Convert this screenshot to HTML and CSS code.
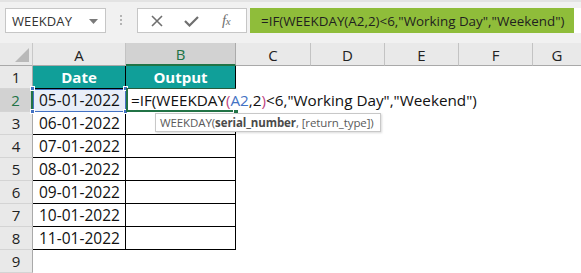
FILE: index.html
```html
<!DOCTYPE html>
<html>
<head>
<meta charset="utf-8">
<link rel="stylesheet" href="styles.css">
</head>
<body>
<div class="app">
  <div class="toolbar">
    <div class="namebox">
      <span class="name">WEEKDAY</span>
      <svg class="caret" width="9" height="5" viewBox="0 0 9 5"><path d="M0 0H9L4.5 5Z" fill="#7a7a7a"/></svg>
    </div>
    <div class="grip">
      <svg width="3" height="11" viewBox="0 0 3 11"><rect x="0" y="0" width="2" height="2" fill="#b4b4b4"/><rect x="0" y="4" width="2" height="2" fill="#b4b4b4"/><rect x="0" y="8" width="2" height="2" fill="#b4b4b4"/></svg>
    </div>
    <div class="fxbox">
      <svg class="ic" width="12" height="12" viewBox="0 0 12 12"><path d="M1 1L11 11M11 1L1 11" stroke="#6f6f6f" stroke-width="1.6"/></svg>
      <svg class="ic" width="15" height="12" viewBox="0 0 15 12"><path d="M1 6L5.5 10.5L14 2" stroke="#6f6f6f" stroke-width="2.2" fill="none"/></svg>
      <span class="fx">f<span class="x">x</span></span>
    </div>
    <div class="formula"><span class="sel">=IF(WEEKDAY(A2,2)&lt;6,"Working Day","Weekend")</span></div>
  </div>

  <div class="sheet">
    <div class="corner"><div class="tri"></div></div>
    <div class="ch">A</div>
    <div class="ch ch-on">B</div>
    <div class="ch">C</div>
    <div class="ch">D</div>
    <div class="ch">E</div>
    <div class="ch">F</div>
    <div class="ch ch-last">G</div>

    <div class="rh">1</div>
    <div class="c t th">Date</div>
    <div class="c t th">Output</div>
    <div class="c"></div><div class="c"></div><div class="c"></div><div class="c"></div><div class="c"></div>

    <div class="rh rh-on">2</div>
    <div class="c t d ref">05-01-2022
      <i class="h tl"></i><i class="h tr"></i><i class="h bl"></i><i class="h br"></i>
    </div>
    <div class="c t active">
      <div class="edit">=IF(WEEKDAY<span class="p">(</span><span class="r">A2</span>,2<span class="p">)</span>&lt;6,"Working Day","Weekend")</div>
      <div class="frame"></div>
      <div class="handle"></div>
      <div class="tip">WEEKDAY(<b>serial_number</b>, [return_type])</div>
    </div>
    <div class="c"></div><div class="c"></div><div class="c"></div><div class="c"></div><div class="c"></div>

    <div class="rh">3</div>
    <div class="c t d">06-01-2022</div><div class="c t"></div>
    <div class="c"></div><div class="c"></div><div class="c"></div><div class="c"></div><div class="c"></div>

    <div class="rh">4</div>
    <div class="c t d">07-01-2022</div><div class="c t"></div>
    <div class="c"></div><div class="c"></div><div class="c"></div><div class="c"></div><div class="c"></div>

    <div class="rh">5</div>
    <div class="c t d">08-01-2022</div><div class="c t"></div>
    <div class="c"></div><div class="c"></div><div class="c"></div><div class="c"></div><div class="c"></div>

    <div class="rh">6</div>
    <div class="c t d">09-01-2022</div><div class="c t"></div>
    <div class="c"></div><div class="c"></div><div class="c"></div><div class="c"></div><div class="c"></div>

    <div class="rh">7</div>
    <div class="c t d">10-01-2022</div><div class="c t"></div>
    <div class="c"></div><div class="c"></div><div class="c"></div><div class="c"></div><div class="c"></div>

    <div class="rh">8</div>
    <div class="c t d">11-01-2022</div><div class="c t"></div>
    <div class="c"></div><div class="c"></div><div class="c"></div><div class="c"></div><div class="c"></div>

    <div class="rh">9</div>
    <div class="c"></div><div class="c"></div>
    <div class="c"></div><div class="c"></div><div class="c"></div><div class="c"></div><div class="c"></div>
  </div>
</div>
</body>
</html>
```

FILE: styles.css
```css
* { box-sizing: border-box; }
html, body { margin: 0; padding: 0; }
body {
  width: 581px;
  height: 273px;
  overflow: hidden;
  background: #ffffff;
  font-family: "Open Sans", "Noto Sans", sans-serif;
}
.app { width: 581px; height: 273px; display: flex; flex-direction: column; }

.toolbar {
  height: 43px;
  background: #f1f1f1;
  border-top: 2px solid #e3e3e3;
  display: flex;
  align-items: flex-start;
  padding: 6px 0 0 5px;
}
.namebox {
  width: 101px;
  height: 25px;
  background: #fff;
  border: 1px solid #c6c6c6;
  display: flex;
  align-items: center;
  justify-content: space-between;
  padding: 0 7px 0 6px;
}
.name { font-size: 13px; color: #333; letter-spacing: 0.1px; }
.caret { margin-top: 1px; }
.grip { width: 31px; height: 25px; display: flex; align-items: center; justify-content: center; }
.fxbox {
  width: 110px;
  height: 25px;
  background: #fff;
  border: 1px solid #c6c6c6;
  display: flex;
  align-items: center;
  padding: 0 0 0 13px;
  gap: 0;
}
.fxbox .ic:first-child { margin-right: 21px; }
.fxbox .ic:nth-child(2) { margin-right: 23px; }
.fx {
  font-family: "Liberation Serif", serif;
  font-style: italic;
  font-size: 15px;
  color: #6f6f6f;
  letter-spacing: -0.5px;
}
.fx .x { font-size: 11px; }
.formula {
  margin-left: 3px;
  flex: 1;
  height: 25px;
  background: #fff;
  display: flex;
  align-items: center;
}
.sel {
  display: flex;
  align-items: center;
  height: 25px;
  width: 324px;
  background: #8fbd3a;
  padding-left: 11px;
  font-size: 13.4px;
  color: #1f1f1f;
  white-space: nowrap;
}

.sheet {
  display: grid;
  grid-template-columns: 33px 93px 110px 75px 74px 74px 74px 48px;
  grid-template-rows: repeat(10, 23px);
  background: #fff;
}
.corner {
  background: #e9e9e9;
  border-right: 1px solid #c8c8c8;
  border-bottom: 1px solid #a9a9a9;
  position: relative;
}
.tri {
  position: absolute;
  right: 3px;
  bottom: 3px;
  width: 0;
  height: 0;
  border-left: 14px solid transparent;
  border-bottom: 14px solid #b9b9b9;
}
.ch {
  background: #e9e9e9;
  border-right: 1px solid #c3c3c3;
  border-bottom: 1px solid #a9a9a9;
  display: flex;
  align-items: center;
  justify-content: center;
  font-size: 15px;
  color: #222;
  padding-top: 1px;
}
.ch-last { border-right: none; }
.ch-on {
  background: #d2d2d2;
  color: #217346;
  border-bottom: 2px solid #217346;
  border-right-color: #ababab;
}
.rh {
  background: #e9e9e9;
  border-right: 1px solid #a9a9a9;
  border-bottom: 1px solid #d4d4d4;
  display: flex;
  align-items: center;
  justify-content: center;
  font-size: 15px;
  color: #222;
}
.rh-on {
  background: #d2d2d2;
  color: #217346;
  border-right: 2px solid #217346;
}
.c { position: relative; }
.t {
  border-right: 1px solid #000;
  border-bottom: 1px solid #000;
}
.th {
  background: #109f99;
  color: #fff;
  font-weight: 700;
  font-size: 15px;
  display: flex;
  align-items: center;
  justify-content: center;
}
.d {
  display: flex;
  align-items: center;
  padding-left: 6px;
  font-size: 15.5px;
  color: #111;
}
.ref {
  background: #e8eef8;
  outline: 1px solid #4472c4;
  outline-offset: -1px;
  border-bottom-color: #4472c4;
  border-right-color: #4472c4;
  z-index: 2;
}
.h {
  position: absolute;
  width: 5px;
  height: 5px;
  background: #4472c4;
  border: 1px solid #ffffff;
}
.tl { left: -3px; top: -3px; }
.tr { right: -3px; top: -3px; }
.bl { left: -3px; bottom: -3px; }
.br { right: -3px; bottom: -3px; }

.active { z-index: 3; border-right: none; }
.frame {
  position: absolute;
  left: 0;
  top: -1px;
  width: 110px;
  height: 24px;
  border-left: 2px solid #217346;
  border-top: 1px solid #2a5a3c;
  border-bottom: 2px solid #217346;
  pointer-events: none;
}
.edit {
  position: absolute;
  left: 2px;
  top: 0;
  height: 22px;
  padding: 0 6px 0 3px;
  background: #fff;
  display: flex;
  align-items: center;
  white-space: nowrap;
  font-size: 15.25px;
  color: #111;
}
.p { color: #c0447f; }
.r { color: #4472c4; }
.handle {
  position: absolute;
  left: 107px;
  top: 20px;
  width: 6px;
  height: 6px;
  background: #217346;
  border: 1px solid #fff;
}
.tip {
  position: absolute;
  left: 29px;
  top: 24px;
  height: 19px;
  padding: 0 6px 0 4px;
  background: #fff;
  border: 1px solid #c8c8c8;
  box-shadow: 1px 1px 2px rgba(0,0,0,0.15);
  font-size: 11.5px;
  letter-spacing: -0.1px;
  color: #5a5a5a;
  white-space: nowrap;
  display: flex;
  align-items: center;
}
.tip b { color: #4a4a4a; }
```
